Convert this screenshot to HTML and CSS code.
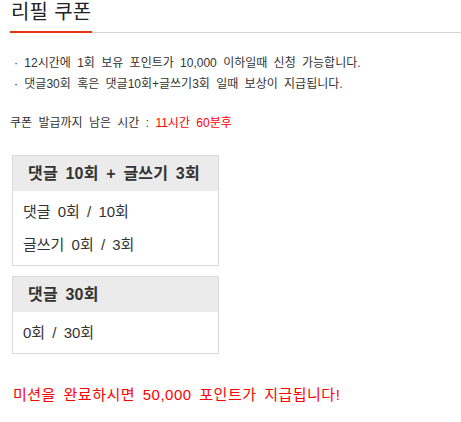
FILE: index.html
```html
<!DOCTYPE html>
<html lang="ko">
<head>
    <meta charset="UTF-8">
    <meta name="viewport" content="width=device-width, initial-scale=1.0">
    <title>리필 쿠폰</title>
    <link rel="stylesheet" href="styles.css">
</head>
<body>
    <div class="page">
        <h2 class="title"><span>리필 쿠폰</span></h2>

        <ul class="notice">
            <li>· 12시간에 1회 보유 포인트가 10,000 이하일때 신청 가능합니다.</li>
            <li>· 댓글30회 혹은 댓글10회+글쓰기3회 일때 보상이 지급됩니다.</li>
        </ul>

        <p class="remain">쿠폰 발급까지 남은 시간 : <span class="red">11시간 60분후</span></p>

        <div class="mission">
            <div class="mission-head">댓글 10회 + 글쓰기 3회</div>
            <div class="mission-body">
                <p>댓글 0회 / 10회</p>
                <p>글쓰기 0회 / 3회</p>
            </div>
        </div>

        <div class="mission">
            <div class="mission-head">댓글 30회</div>
            <div class="mission-body">
                <p>0회 / 30회</p>
            </div>
        </div>

        <p class="reward">미션을 완료하시면 50,000 포인트가 지급됩니다!</p>
    </div>
</body>
</html>
```

FILE: styles.css
```css
body {
    margin: 0;
    background: #fff;
    color: #333;
    font-family: "Liberation Sans", "Noto Sans CJK KR", sans-serif;
    word-spacing: 3px;
}
.page {
    padding-left: 10px;
}
.title {
    display: flex;
    margin: 0;
    border-bottom: 1px solid #d4d4d4;
    font-size: 20px;
    font-weight: normal;
    color: #222;
    word-spacing: 1px;
}
.title span {
    padding: 0 1px 7px;
    margin-bottom: -1px;
    line-height: 24px;
    border-bottom: 2px solid #e8340c;
}
.notice {
    list-style: none;
    margin: 20px 0 0;
    padding: 0 0 0 4px;
    font-size: 12px;
    line-height: 21px;
}
.remain {
    margin: 18px 0 0;
    font-size: 12px;
    line-height: 21px;
}
.red {
    color: #f00;
}
.mission {
    width: 205px;
    margin: 21px 0 0 2px;
    border: 1px solid #dadada;
}
.mission + .mission {
    margin-top: 10px;
}
.mission-head {
    height: 35px;
    padding-left: 15px;
    background: #ebebeb;
    font-size: 16px;
    font-weight: bold;
    line-height: 35px;
    letter-spacing: 0.2px;
}
.mission-body {
    padding: 4px 10px;
    font-size: 15px;
}
.mission-body p {
    margin: 0;
    line-height: 33px;
}
.reward {
    margin: 30px 0 0 3px;
    font-size: 15px;
    line-height: 22px;
    letter-spacing: 0.5px;
    color: #f00;
}
```
